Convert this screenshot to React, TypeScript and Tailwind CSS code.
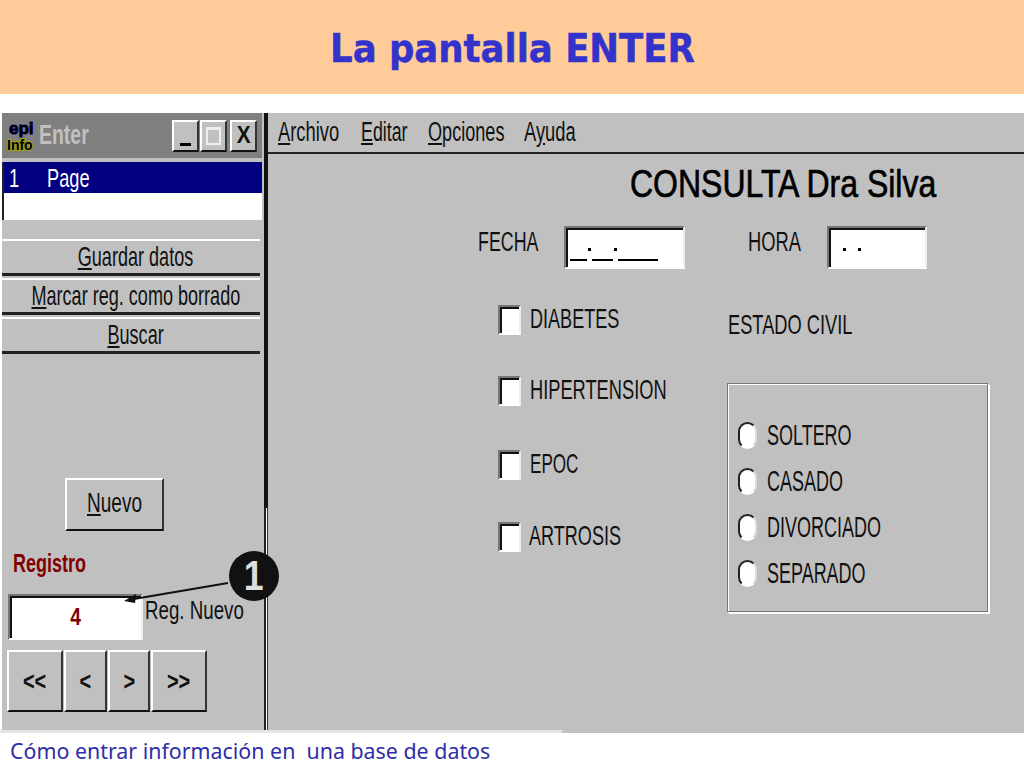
import type { ReactNode } from 'react';

const sans = 'font-["Liberation_Sans",sans-serif] leading-none whitespace-nowrap text-[#111]';
const raised = 'border-2 border-t-white border-l-white border-r-[#333] border-b-[#111] bg-[#c0c0c0]';
const sunken = 'border-2 border-t-[#777] border-l-[#777] border-r-[#eee] border-b-white bg-white shadow-[inset_2px_2px_0_#111]';

function PanelButton({ children }: { children: ReactNode }) {
  return (
    <div className="h-[37px] w-[258px] pl-[9px] flex items-center justify-center border-t-2 border-t-white border-b-[3px] border-b-[#222] bg-[#c0c0c0]">
      <span className={`${sans} text-[28px] scale-x-[.645]`}>{children}</span>
    </div>
  );
}

function NavButton({ label, width }: { label: string; width: string }) {
  return (
    <div className={`${raised} ${width} h-[62px] flex items-center justify-center`}>
      <span className={`${sans} text-[25px] font-bold scale-x-[.8]`}>{label}</span>
    </div>
  );
}

function CheckBox({ pos }: { pos: string }) {
  return <div className={`${sunken} absolute ${pos} w-[23px] h-[30px]`} />;
}

function Radio({ label }: { label: string }) {
  return (
    <div className="h-[46px] flex items-center gap-[10px]">
      <div className="w-[19px] h-[27px] rounded-full border-2 border-t-[#222] border-l-[#222] border-r-[#ddd] border-b-white bg-white" />
      <span className={`${sans} text-[29px] origin-left scale-x-[.62]`}>{label}</span>
    </div>
  );
}

export default function App() {
  return (
    <div className="relative w-[1024px] h-[768px] bg-white overflow-hidden flex flex-col">
      <div className='h-[94px] shrink-0 bg-[#ffcc99] flex items-center justify-center pt-[2px]'>
        <span className='font-["DejaVu_Sans",sans-serif] font-bold text-[39px] leading-none whitespace-nowrap scale-x-[.91] text-[#3333cc] [-webkit-text-stroke:0.5px_#3333cc]'>La pantalla ENTER</span>
      </div>

      <div className="mt-[19px] ml-[2px] h-[620px] flex bg-[#c0c0c0]">
        {/* left panel */}
        <div className="w-[262px] shrink-0 flex flex-col">
          <div className="h-[45px] w-[260px] bg-[#808080] flex items-center pl-[4px] pr-[5px] gap-[5px]">
            <svg width="28" height="36" viewBox="0 0 28 36" className="shrink-0">
              <text x="3" y="16" fontFamily="Liberation Sans" fontWeight="700" fontSize="17" fill="#000" stroke="#000080" strokeWidth="1" paintOrder="stroke">epi</text>
              <text x="1" y="32" fontFamily="Liberation Sans" fontWeight="700" fontSize="14" fill="#000" stroke="#a0a000" strokeWidth="2" paintOrder="stroke">Info</text>
            </svg>
            <span className={`${sans} text-[27px] font-bold text-[#c0c0c0] origin-left scale-x-[.72] w-[60px]`}>Enter</span>
            <div className="ml-auto flex">
              <div className={`${raised} w-[27px] h-[32px] flex items-end justify-center pb-[4px]`}>
                <div className="w-[11px] h-[3px] bg-black" />
              </div>
              <div className={`${raised} ml-[1px] w-[27px] h-[32px] flex items-center justify-center`}>
                <div className="w-[15px] h-[18px] border-2 border-[#eee] border-t-[3px]" />
              </div>
              <div className={`${raised} ml-[3px] w-[27px] h-[32px] flex items-center justify-center`}>
                <span className={`${sans} text-[23px] font-bold scale-x-[.9]`}>X</span>
              </div>
            </div>
          </div>

          <div className="mt-[4px] h-[58px] w-[260px] border-l-2 border-l-[#222] bg-white flex flex-col">
            <div className="h-[31px] bg-[#000080] flex items-center pl-[5px]">
              <span className={`${sans} text-[26px] text-white origin-left scale-x-[.7]`}>1</span>
              <span className={`${sans} text-[26px] text-white origin-left scale-x-[.7] ml-[24px]`}>Page</span>
            </div>
          </div>

          <div className="mt-[19px] flex flex-col gap-[2px]">
            <PanelButton><u>G</u>uardar datos</PanelButton>
            <PanelButton><u>M</u>arcar reg. como borrado</PanelButton>
            <PanelButton><u>B</u>uscar</PanelButton>
          </div>

          <div className={`${raised} mt-[124px] ml-[63px] w-[99px] h-[53px] pb-[3px] flex items-center justify-center`}>
            <span className={`${sans} text-[28px] scale-x-[.68]`}><u>N</u>uevo</span>
          </div>

          <div className={`${sans} mt-[20px] ml-[11px] text-[25px] font-bold text-[#800000] origin-left scale-x-[.72]`}>Registro</div>

          <div className="mt-[18px] ml-[6px] flex items-start">
            <div className={`${sunken} shrink-0 w-[135px] h-[46px] flex items-center justify-center`}>
              <span className={`${sans} text-[24px] font-bold text-[#800000] scale-x-[.8]`}>4</span>
            </div>
            <span className={`${sans} text-[26px] mt-[3px] ml-[2px] origin-left scale-x-[.72]`}>Reg. Nuevo</span>
          </div>

          <div className="mt-[10px] ml-[5px] flex gap-[1px]">
            <NavButton label="<<" width="w-[56px]" />
            <NavButton label="<" width="w-[43px]" />
            <NavButton label=">" width="w-[42px]" />
            <NavButton label=">>" width="w-[56px]" />
          </div>
        </div>

        {/* divider */}
        <div className="w-[4px] shrink-0 flex flex-col">
          <div className="h-[395px] bg-[#111]" />
          <div className="flex-1 border-l-[2px] border-r-[1px] border-l-[#222] border-r-[#333] bg-white" />
        </div>

        {/* right side */}
        <div className="flex-1 flex flex-col">
          <div className="h-[41px] shrink-0 border-b-2 border-b-[#222] flex items-center pl-[10px]">
            <div className="w-[83px]"><span className={`${sans} inline-block text-[27px] origin-left scale-x-[.68]`}><u>A</u>rchivo</span></div>
            <div className="w-[67px]"><span className={`${sans} inline-block text-[27px] origin-left scale-x-[.66]`}><u>E</u>ditar</span></div>
            <div className="w-[96px]"><span className={`${sans} inline-block text-[27px] origin-left scale-x-[.67]`}><u>O</u>pciones</span></div>
            <div className="w-[60px]"><span className={`${sans} inline-block text-[27px] origin-left scale-x-[.68]`}>A<u>y</u>uda</span></div>
          </div>

          {/* form canvas */}
          <div className="relative flex-1">
            <div className={`${sans} absolute left-[362px] top-[10px] text-[39px] origin-left scale-x-[.82] text-black [-webkit-text-stroke:0.7px_black]`}>CONSULTA Dra Silva</div>

            <div className={`${sans} absolute left-[210px] top-[75px] text-[27px] origin-left scale-x-[.66]`}>FECHA</div>
            <div className={`${sunken} absolute left-[296px] top-[72px] w-[121px] h-[43px] pl-[4px] flex items-end gap-[5px]`}>
              <div className="mb-[6px] w-[17px] h-[2px] bg-black" />
              <div className="mb-[6px] w-[21px] h-[2px] bg-black" />
              <div className="mb-[6px] w-[40px] h-[2px] bg-black" />
              <div className="absolute left-[22px] top-[20px] w-[3px] h-[3px] bg-black" />
              <div className="absolute left-[48px] top-[20px] w-[3px] h-[3px] bg-black" />
            </div>
            <div className={`${sans} absolute left-[480px] top-[75px] text-[27px] origin-left scale-x-[.68]`}>HORA</div>
            <div className={`${sunken} absolute left-[559px] top-[72px] w-[100px] h-[43px]`}>
              <div className="absolute left-[14px] top-[20px] w-[3px] h-[3px] bg-black" />
              <div className="absolute left-[29px] top-[20px] w-[3px] h-[3px] bg-black" />
            </div>

            <CheckBox pos="left-[230px] top-[151px]" />
            <div className={`${sans} absolute left-[262px] top-[151px] text-[28px] origin-left scale-x-[.645]`}>DIABETES</div>
            <CheckBox pos="left-[230px] top-[222px]" />
            <div className={`${sans} absolute left-[262px] top-[222px] text-[28px] origin-left scale-x-[.652]`}>HIPERTENSION</div>
            <CheckBox pos="left-[230px] top-[296px]" />
            <div className={`${sans} absolute left-[262px] top-[296px] text-[28px] origin-left scale-x-[.61]`}>EPOC</div>
            <CheckBox pos="left-[230px] top-[368px]" />
            <div className={`${sans} absolute left-[261px] top-[368px] text-[28px] origin-left scale-x-[.645]`}>ARTROSIS</div>

            <div className={`${sans} absolute left-[460px] top-[157px] text-[28px] origin-left scale-x-[.652]`}>ESTADO CIVIL</div>

            <div className="absolute left-[459px] top-[229px] w-[261px] h-[229px] border border-[#777] shadow-[inset_1px_1px_0_white,1px_1px_0_white,2px_2px_0_white] pl-[10px] pt-[28px]">
              <Radio label="SOLTERO" />
              <Radio label="CASADO" />
              <Radio label="DIVORCIADO" />
              <Radio label="SEPARADO" />
            </div>
          </div>
        </div>
      </div>

      <div className="relative h-0">
        <div className="absolute left-0 bottom-0 w-[562px] h-[3px] bg-[#e4e4e4]" />
      </div>

      <div className="pl-[10px] pt-[3px]">
        <div className='inline-block font-["Noto_Sans",sans-serif] text-[22px] leading-[28px] text-[#2e2ea8] whitespace-pre origin-left scale-x-[.972]'>
          Cómo entrar información en  una base de datos
        </div>
      </div>

      {/* annotation */}
      <div className="absolute left-[229px] top-[551px] w-[50px] h-[50px] rounded-full bg-[#111] flex items-center justify-center">
        <span className='font-["Liberation_Sans",sans-serif] font-bold text-[42px] leading-none scale-x-[.85] text-[#ddd]'>1</span>
      </div>
      <svg className="absolute left-[120px] top-[578px]" width="112" height="30" viewBox="0 0 112 30">
        <path d="M108 5L8 22" stroke="#111" strokeWidth="2" fill="none" />
        <path d="M4 23L16 16L15 25Z" fill="#111" />
      </svg>
    </div>
  );
}
